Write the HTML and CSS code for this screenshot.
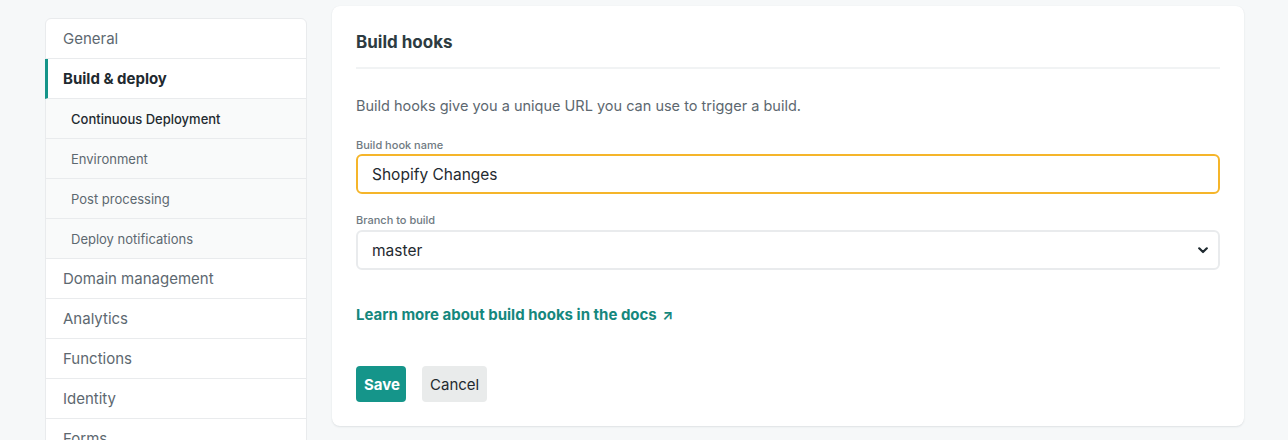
FILE: index.html
```html
<!DOCTYPE html>
<html>
<head>
<meta charset="utf-8">
<link rel="stylesheet" href="styles.css">
</head>
<body>
<div class="page">
  <nav class="sidenav">
    <a class="nav-item">General</a>
    <a class="nav-item active">Build &amp; deploy</a>
    <a class="nav-sub current">Continuous Deployment</a>
    <a class="nav-sub">Environment</a>
    <a class="nav-sub">Post processing</a>
    <a class="nav-sub">Deploy notifications</a>
    <a class="nav-item">Domain management</a>
    <a class="nav-item">Analytics</a>
    <a class="nav-item">Functions</a>
    <a class="nav-item">Identity</a>
    <a class="nav-item">Forms</a>
  </nav>
  <main class="card">
    <h2 class="card-title">Build hooks</h2>
    <p class="desc">Build hooks give you a unique URL you can use to trigger a build.</p>
    <label class="label label-first">Build hook name</label>
    <input class="field field-focus" type="text" value="Shopify Changes">
    <label class="label">Branch to build</label>
    <div class="select-wrap">
      <select class="field select"><option>master</option></select>
      <svg class="chevron" width="10" height="7" viewBox="0 0 10 7"><path d="M1.2 1.3 L5 5 L8.8 1.3" fill="none" stroke="#1f2a30" stroke-width="2.2" stroke-linecap="round" stroke-linejoin="round"/></svg>
    </div>
    <a class="doc-link">Learn more about build hooks in the docs <span class="arrow">↗</span></a>
    <div class="actions">
      <button class="btn btn-primary">Save</button>
      <button class="btn btn-secondary">Cancel</button>
    </div>
  </main>
</div>
</body>
</html>
```

FILE: styles.css
```css
* { box-sizing: border-box; }
html, body { margin: 0; padding: 0; }
body {
  background: #f6f8f9;
  font-family: Inter, "Noto Sans", sans-serif;
  color: #1f2a30;
  height: 440px;
  overflow: hidden;
}
.page {
  display: flex;
  align-items: flex-start;
  gap: 25px;
  padding: 6px 44px 0 45px;
}
.sidenav {
  width: 262px;
  flex: none;
  margin-top: 12px;
  background: #fff;
  border: 1px solid #e9ebed;
  border-radius: 6px 6px 0 0;
  display: flex;
  flex-direction: column;
}
.nav-item, .nav-sub {
  display: flex;
  align-items: center;
  height: 40px;
  border-bottom: 1px solid #e9ebed;
  text-decoration: none;
}
.nav-item {
  font-size: 15px;
  color: #5d6870;
  padding-left: 17px;
}
.nav-item.active {
  color: #1f2a30;
  font-weight: 700;
  border-left: 3px solid #15958a;
  padding-left: 15px;
  margin-left: -1px;
}
.nav-sub {
  font-size: 13px;
  color: #5d6870;
  background: #f9fafa;
  padding-left: 25px;
}
.nav-sub.current {
  color: #1f2a30;
  font-weight: 500;
}
.card {
  flex: none;
  width: 912px;
  background: #fff;
  border-radius: 8px;
  padding: 24px;
  box-shadow: 0 1px 2px rgba(30, 50, 60, 0.10), 0 0 1px rgba(30, 50, 60, 0.06);
  display: flex;
  flex-direction: column;
  align-items: flex-start;
}
.card-title {
  margin: 0;
  align-self: stretch;
  font-size: 17px;
  line-height: 24px;
  font-weight: 700;
  color: #2d3b41;
  padding-bottom: 13px;
  border-bottom: 2px solid #f1f3f4;
}
.desc {
  margin: 26px 0 0;
  font-size: 14.5px;
  line-height: 22px;
  color: #5d6870;
}
.label {
  display: block;
  margin-top: 19px;
  font-size: 11px;
  line-height: 14px;
  color: #6f7a82;
  font-weight: 500;
}
.label-first { margin-top: 21px; }
.field {
  align-self: stretch;
  height: 40px;
  margin-top: 2px;
  border: 2px solid #e9ebed;
  border-radius: 6px;
  padding: 0 14px;
  font-family: Inter, "Noto Sans", sans-serif;
  font-size: 15.5px;
  color: #1f2a30;
  background: #fff;
  outline: none;
}
.field-focus { border-color: #f5b52a; }
.select-wrap {
  align-self: stretch;
  position: relative;
  display: flex;
  margin-top: 3px;
}
.select {
  flex: 1;
  margin-top: 0;
  appearance: none;
  -webkit-appearance: none;
}
.chevron {
  position: absolute;
  right: 12px;
  top: 17px;
}
.doc-link {
  margin-top: 34px;
  font-size: 15px;
  line-height: 22px;
  font-weight: 700;
  color: #15877d;
  text-decoration: none;
}
.arrow { font-weight: 700; font-size: 14px; margin-left: 2px; }
.actions {
  display: flex;
  gap: 16px;
  margin-top: 40px;
}
.btn {
  height: 36px;
  border: none;
  border-radius: 4px;
  font-family: Inter, "Noto Sans", sans-serif;
  font-size: 15px;
  padding: 0 8px;
}
.btn-primary {
  background: #15958a;
  color: #fff;
  font-weight: 700;
  width: 50px;
}
.btn-secondary {
  background: #e9ebeb;
  color: #1f2a30;
  width: 65px;
}
```
